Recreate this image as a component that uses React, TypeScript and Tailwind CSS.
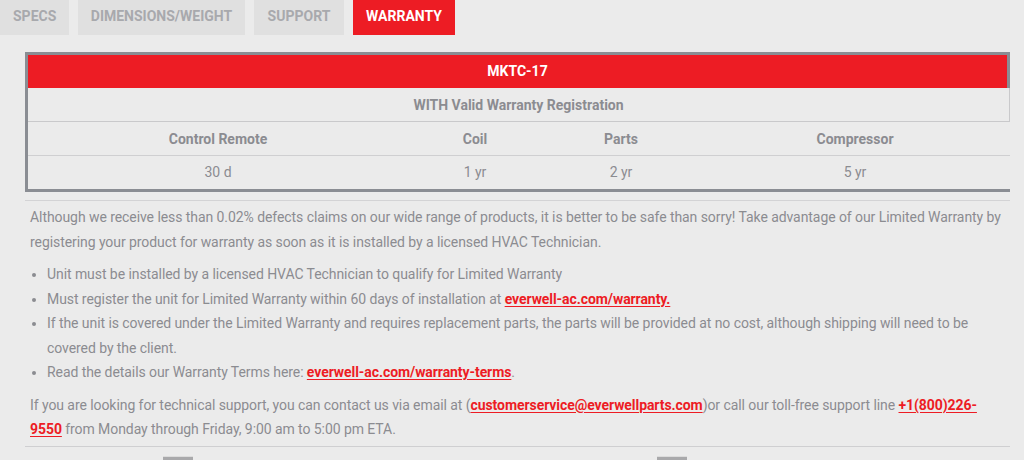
import React from 'react';

const tabs = [
  { label: 'SPECS', active: false, cls: 'w-[69px] pl-[13px]' },
  { label: 'DIMENSIONS/WEIGHT', active: false, cls: 'w-[167px] justify-center' },
  { label: 'SUPPORT', active: false, cls: 'w-[90px] justify-center' },
  { label: 'WARRANTY', active: true, cls: 'w-[102px] justify-center' },
];

const columns = [
  { name: 'Control Remote', value: '30 d', w: 'w-[380px]' },
  { name: 'Coil', value: '1 yr', w: 'w-[134px]' },
  { name: 'Parts', value: '2 yr', w: 'w-[158px]' },
  { name: 'Compressor', value: '5 yr', w: 'flex-1' },
];

const RedLink: React.FC<{ children: React.ReactNode }> = ({ children }) => (
  <a className="font-bold text-[#ed1c24] underline underline-offset-2 decoration-1">{children}</a>
);

export default function App() {
  return (
    <div className="w-[1024px] h-[460px] overflow-hidden bg-[#ebebeb] text-[14px] text-[#8b8c91]" style={{ fontFamily: 'Roboto, "Liberation Sans", sans-serif' }}>
      {/* tabs */}
      <div className="flex gap-[9px] h-[35px]">
        {tabs.map((t) => (
          <div
            key={t.label}
            className={`flex items-center h-full pb-[2px] font-bold text-[14px] ${t.cls} ${
              t.active ? 'bg-[#ed1c24] text-white' : 'bg-[#e0e0e0] text-[#a8a9ad]'
            }`}
          >
            {t.label}
          </div>
        ))}
      </div>

      <div className="pl-[25px] pt-[17px]">
        {/* warranty table */}
        <div className="w-[985px] border-t-[3px] border-l-[3px] border-b-[3px] border-[#8a8d93]">
          <div className="h-[33px] flex items-center justify-center bg-[#ed1c24] text-white font-bold border-r-[3px] border-[#8a8d93]">
            MKTC-17
          </div>
          <div className="h-[34px] flex items-center justify-center pt-[2px] font-bold border-r border-b border-[#c9c9cb]">
            WITH Valid Warranty Registration
          </div>
          <div className="flex h-[34px] pt-[2px] border-b border-[#cfcfd1] font-bold">
            {columns.map((c) => (
              <div key={c.name} className={`${c.w} flex items-center justify-center`}>{c.name}</div>
            ))}
          </div>
          <div className="flex h-[33px]">
            {columns.map((c) => (
              <div key={c.name} className={`${c.w} flex items-center justify-center`}>{c.value}</div>
            ))}
          </div>
        </div>

        <div className="w-[985px] h-px bg-[#d3d3d5] mt-[8px]" />

        {/* warranty copy */}
        <div className="pl-[5px] pr-[20px] leading-[24.5px] pt-[4px] tracking-[-0.07px]">
          <p>
            Although we receive less than 0.02% defects claims on our wide range of products, it is better to be safe than sorry! Take advantage of our Limited Warranty by registering your product for warranty as soon as it is installed by a licensed HVAC Technician.
          </p>
          <ul className="list-disc pl-[17px] mt-[8px]">
            <li>Unit must be installed by a licensed HVAC Technician to qualify for Limited Warranty</li>
            <li>
              Must register the unit for Limited Warranty within 60 days of installation at <RedLink>everwell-ac.com/warranty.</RedLink>
            </li>
            <li>
              If the unit is covered under the Limited Warranty and requires replacement parts, the parts will be provided at no cost, although shipping will need to be covered by the client.
            </li>
            <li>
              Read the details our Warranty Terms here: <RedLink>everwell-ac.com/warranty-terms</RedLink>.
            </li>
          </ul>
          <p className="mt-[8px]">
            If you are looking for technical support, you can contact us via email at (<RedLink>customerservice@everwellparts.com</RedLink>)or call our toll-free support line <RedLink>+1(800)226-9550</RedLink> from Monday through Friday, 9:00 am to 5:00 pm ETA.
          </p>
        </div>

        <div className="w-[985px] h-px bg-[#cfcfd1] mt-[4px]" />

        {/* bottom controls peeking in */}
        <div className="flex mt-[9px]">
          <div className="ml-[138px] w-[30px] h-[6px] border-t border-[#dcdcdc] bg-[#a9a9ab]" />
          <div className="ml-[464px] w-[30px] h-[6px] border-t border-[#dcdcdc] bg-[#a9a9ab]" />
        </div>
      </div>
    </div>
  );
}
